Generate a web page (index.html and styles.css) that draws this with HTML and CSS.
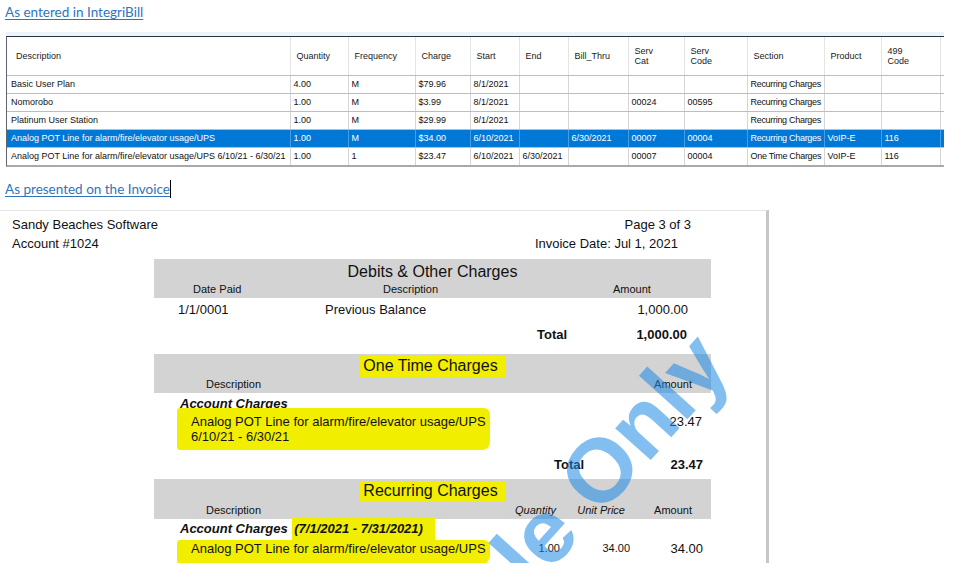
FILE: index.html
```html
<!DOCTYPE html>
<html>
<head>
<meta charset="utf-8">
<link rel="stylesheet" href="styles.css">
</head>
<body>
<p class="doc-link first"><a>As entered in IntegriBill</a></p>
<div class="grid-frame">
  <table class="grid">
    <colgroup>
      <col style="width:283px"><col style="width:58px"><col style="width:67px"><col style="width:55px"><col style="width:49px"><col style="width:49px"><col style="width:60px"><col style="width:56px"><col style="width:63px"><col style="width:77px"><col style="width:57px"><col style="width:59px"><col style="width:4px">
    </colgroup>
    <thead>
      <tr>
        <th class="first-col">Description</th><th>Quantity</th><th>Frequency</th><th>Charge</th><th>Start</th><th>End</th><th>Bill_Thru</th><th>Serv<br>Cat</th><th>Serv<br>Code</th><th>Section</th><th>Product</th><th>499<br>Code</th><th class="filler"></th>
      </tr>
    </thead>
    <tbody>
      <tr><td class="first-col">Basic User Plan</td><td>4.00</td><td>M</td><td>$79.96</td><td>8/1/2021</td><td></td><td></td><td></td><td></td><td class="section">Recurring Charges</td><td></td><td></td><td class="filler"></td></tr>
      <tr><td class="first-col">Nomorobo</td><td>1.00</td><td>M</td><td>$3.99</td><td>8/1/2021</td><td></td><td></td><td>00024</td><td>00595</td><td class="section">Recurring Charges</td><td></td><td></td><td class="filler"></td></tr>
      <tr><td class="first-col">Platinum User Station</td><td>1.00</td><td>M</td><td>$29.99</td><td>8/1/2021</td><td></td><td></td><td></td><td></td><td class="section">Recurring Charges</td><td></td><td></td><td class="filler"></td></tr>
      <tr class="selected"><td class="first-col">Analog POT Line for alarm/fire/elevator usage/UPS</td><td>1.00</td><td>M</td><td>$34.00</td><td>6/10/2021</td><td></td><td>6/30/2021</td><td>00007</td><td>00004</td><td class="section">Recurring Charges</td><td>VoIP-E</td><td>116</td><td class="filler"></td></tr>
      <tr class="last"><td class="first-col">Analog POT Line for alarm/fire/elevator usage/UPS 6/10/21 - 6/30/21</td><td>1.00</td><td>1</td><td>$23.47</td><td>6/10/2021</td><td>6/30/2021</td><td></td><td>00007</td><td>00004</td><td class="section">One Time Charges</td><td>VoIP-E</td><td>116</td><td class="filler"></td></tr>
    </tbody>
  </table>
</div>
<p class="doc-link second"><a>As presented on the Invoice</a><span class="caret"></span></p>

<div class="invoice">
  <div class="inv-head">
    <div class="inv-cust">
      <div>Sandy Beaches Software</div>
      <div>Account #1024</div>
    </div>
    <div class="inv-meta">
      <div class="page">Page 3 of 3</div>
      <div class="date">Invoice Date: Jul 1, 2021</div>
    </div>
  </div>

  <div class="sec">
    <div class="band band-debits">
      <div class="band-title">Debits &amp; Other Charges</div>
      <div class="sub debits-sub">
        <span class="c1">Date Paid</span><span>Description</span><span>Amount</span>
      </div>
    </div>
    <div class="debit-row">
      <span class="c1">1/1/0001</span><span>Previous Balance</span><span class="amt">1,000.00</span>
    </div>
    <div class="total-row t1"><span>Total</span><span>1,000.00</span></div>

    <div class="band band-ot">
      <div class="band-title"><span class="hl-title">One Time Charges</span></div>
      <div class="sub ot-sub"><span class="desc">Description</span><span class="amt">Amount</span></div>
    </div>
    <div class="ac-title">Account Charges</div>
    <div class="ot-row">
      <div class="hl-item">Analog POT Line for alarm/fire/elevator usage/UPS<br>6/10/21 - 6/30/21</div>
      <div class="ot-amt">23.47</div>
    </div>
    <div class="total-row t2"><span>Total</span><span>23.47</span></div>

    <div class="band band-rc">
      <div class="band-title"><span class="hl-title">Recurring Charges</span></div>
      <div class="sub rc-grid rc-sub">
        <span class="desc">Description</span><span class="it q">Quantity</span><span class="it u">Unit Price</span><span class="a">Amount</span>
      </div>
    </div>
    <div class="ac-title ac2">Account Charges <span class="hl-date">(7/1/2021 - 7/31/2021)</span></div>
    <div class="rc-grid rc-row">
      <div><div class="hl-item hl2">Analog POT Line for alarm/fire/elevator usage/UPS</div></div>
      <span class="v q">1.00</span><span class="v u">34.00</span><span class="v a">34.00</span>
    </div>
  </div>

  <div class="watermark">Sample Only</div>
</div>
</body>
</html>
```

FILE: styles.css
```css
html, body {
  margin: 0;
  padding: 0;
  background: #ffffff;
}

body {
  font-family: "Liberation Sans", Arial, sans-serif;
  color: #111;
}

.doc-link {
  margin: 0;
  padding-left: 5px;
  font-family: Lato, "Open Sans", sans-serif;
  font-size: 13.5px;
  line-height: 24px;
}

.doc-link a {
  color: #2f74bd;
  text-decoration: underline;
  text-underline-offset: 2px;
}

.doc-link.first {
  height: 32px;
}

.doc-link.second {
  padding-top: 10px;
  padding-bottom: 9px;
  display: flex;
  align-items: center;
}

.caret {
  display: inline-block;
  width: 1px;
  height: 18px;
  background: #000;
}

.grid-frame {
  margin-top: 4px;
  margin-left: 6px;
  width: 937px;
  border-top: 1px solid #2b3440;
  border-left: 1px solid #5d6670;
  border-bottom: 2px solid #a9a9a9;
  box-shadow: 0 -4px 0 #edf3fa;
}

.grid {
  border-collapse: collapse;
  table-layout: fixed;
  width: 937px;
  font-family: "Liberation Sans", Arial, sans-serif;
  font-size: 9px;
  line-height: 10px;
  color: #111;
}

.grid thead tr {
  height: 38px;
}

.grid tbody tr {
  height: 18px;
}

.grid th {
  font-weight: normal;
  text-align: left;
  vertical-align: middle;
  padding: 0 0 0 6px;
  border-right: 1px solid #e4e4e4;
  border-bottom: 1px solid #bdbdbd;
  color: #1a1a1a;
}

.grid th.first-col {
  padding-left: 9px;
}

.grid td {
  padding: 0 0 0 3px;
  white-space: nowrap;
  overflow: hidden;
  border-right: 1px solid #d5d5d5;
  border-bottom: 1px solid #bdbdbd;
}

.grid td.first-col {
  padding-left: 4px;
}

.grid td.section {
  letter-spacing: -0.3px;
}

.grid .filler {
  border-right: none;
}

.grid tr.last td {
  border-bottom: none;
}

.grid tr.selected td {
  background: #0078d7;
  color: #ffffff;
  border-right-color: #4a9be0;
}

/* Invoice */
.invoice {
  position: relative;
  overflow: hidden;
  width: 766px;
  height: 352px;
  border-top: 1px solid #e3e3e3;
  border-right: 3px solid #c6c6c6;
  font-family: "Liberation Sans", Arial, sans-serif;
  color: #111;
}

.inv-head {
  display: flex;
  justify-content: space-between;
  padding: 4px 0 0 12px;
  font-size: 13px;
  line-height: 19px;
}

.inv-meta {
  text-align: right;
}

.inv-meta .page {
  padding-right: 75px;
}

.inv-meta .date {
  padding-right: 88px;
}

.sec {
  margin-left: 154px;
  width: 557px;
}

.band {
  background: #d3d3d3;
}

.band-title {
  text-align: center;
  font-size: 16px;
}

.sub {
  font-size: 11px;
}

.band-debits {
  margin-top: 6px;
  padding-top: 3px;
}

.band-debits .band-title {
  line-height: 19px;
}

.debits-sub {
  display: grid;
  grid-template-columns: 229px 230px 1fr;
  line-height: 17px;
}

.debits-sub .c1 {
  padding-left: 39px;
}

.debit-row {
  display: grid;
  grid-template-columns: 171px 1fr auto;
  margin-top: 2px;
  padding-right: 23px;
  font-size: 13px;
  line-height: 20px;
}

.debit-row .c1 {
  padding-left: 24px;
}

.total-row {
  display: flex;
  justify-content: space-between;
  font-size: 13px;
  font-weight: bold;
  line-height: 20px;
}

.total-row.t1 {
  margin-top: 5px;
  padding-left: 383px;
  padding-right: 24px;
}

.total-row.t2 {
  margin-top: 5px;
  padding-left: 400px;
  padding-right: 8px;
}

.hl-title {
  background: #f1ee00;
  padding: 1px 8px 3px 4px;
}

.band-ot {
  margin-top: 9px;
  padding-top: 2px;
}

.band-ot .band-title {
  line-height: 19px;
}

.ot-sub {
  display: flex;
  justify-content: space-between;
  line-height: 18px;
  padding-right: 19px;
}

.sub .desc {
  padding-left: 52px;
}

.ac-title {
  margin-top: 3px;
  padding-left: 26px;
  font-size: 13px;
  font-weight: bold;
  font-style: italic;
  line-height: 16px;
}

.ot-row {
  display: grid;
  grid-template-columns: 1fr auto;
  align-items: start;
  margin-top: -4px;
  font-size: 13px;
  line-height: 15px;
}

.hl-item {
  width: fit-content;
  margin-left: 23px;
  padding: 6px 4px 6px 14px;
  background: #f1ee00;
  border-radius: 3px 6px 8px 3px;
}

.ot-amt {
  padding-top: 6px;
  padding-right: 9px;
}

.band-rc {
  margin-top: 4px;
  padding-top: 2px;
}

.band-rc .band-title {
  line-height: 20px;
}

.rc-grid {
  display: grid;
  grid-template-columns: 360px 60px 70px 67px;
}

.rc-sub {
  line-height: 18px;
}

.rc-sub .it {
  font-style: italic;
}

.rc-sub .q,
.rc-sub .u,
.rc-sub .a {
  text-align: right;
}

.rc-sub .q {
  padding-right: 18px;
}

.rc-sub .u {
  padding-right: 19px;
}

.rc-sub .a {
  padding-right: 19px;
}

.ac2 {
  margin-top: 2px;
}

.hl-date {
  background: #f1ee00;
  padding: 3px 12px 4px 2px;
  margin-left: 1px;
}

.rc-row {
  margin-top: 3px;
  align-items: start;
  line-height: 15px;
}

.hl2 {
  padding: 1px 4px 8px 14px;
  font-size: 13px;
}

.rc-row .v {
  text-align: right;
  padding-top: 1px;
  font-size: 11px;
}

.rc-row .q,
.rc-row .u {
  padding-right: 14px;
}

.rc-row .a {
  padding-right: 8px;
  font-size: 13px;
}

.watermark {
  position: absolute;
  left: 528px;
  top: 339px;
  transform: translate(-50%, -50%) rotate(-48deg);
  font-family: "Liberation Sans", Arial, sans-serif;
  font-weight: bold;
  font-size: 90px;
  line-height: 1;
  white-space: nowrap;
  color: rgba(30, 136, 229, 0.55);
  pointer-events: none;
}
```
